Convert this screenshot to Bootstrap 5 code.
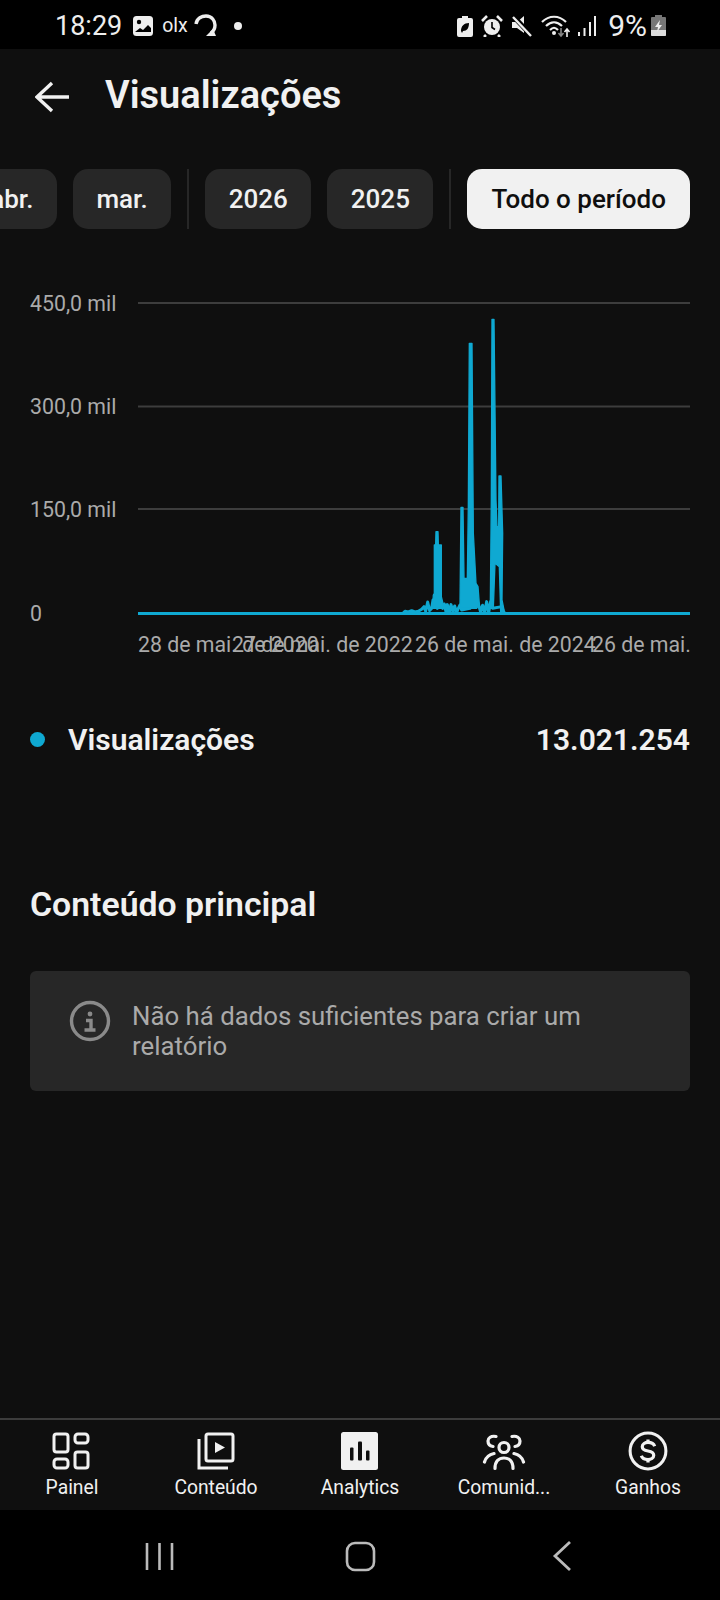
<!DOCTYPE html>
<html lang="pt-BR">
<head>
  <meta charset="UTF-8">
  <title>Visualizações</title>
  <link href="https://cdn.jsdelivr.net/npm/bootstrap@5.3.3/dist/css/bootstrap.min.css" rel="stylesheet">
  <style>
    body { background: #000; margin: 0; font-family: Roboto, "Noto Sans", sans-serif; color: #f1f1f1; }
    svg { display: block; flex-shrink: 0; }
    .phone { width: 720px; height: 1600px; background: #0f0f0f; overflow: hidden; }
    .status-bar { height: 49px; background: #000; padding: 2px 54px 0 55px; }
    .status-time { font-size: 27px; line-height: 30px; color: #eee; margin-right: 10px; }
    .status-pct { font-size: 30px; line-height: 30px; color: #eee; margin: 0 4px 0 11px; }
    .olx-mark { font-size: 19.500px; line-height: 20px; width: 28px; margin-left: 8px; color: #eee; }
    .page-head { height: 95px; padding-left: 35px; }
    .page-title { font-size: 38px; font-weight: 600; margin: 0 0 3px 35px; line-height: 44px; }
    .chip-row { margin-top: 25px; height: 60px; padding-right: 30px; gap: 16px; overflow: hidden; }
    .chip-item { height: 60px; background: #272727; border-radius: 15px; font-size: 26px; font-weight: 500; padding: 0 23.5px; flex-shrink: 0; }
    .chip-on { background: #f1f1f1; color: #0f0f0f; padding: 0 24px; }
    .chip-sep { width: 2px; height: 60px; background: #272727; flex-shrink: 0; }
    .chart-wrap { margin-top: 61px; }
    .chart-wrap text { font-family: Roboto, sans-serif; font-size: 21.300px; fill: #aaa; }
    .legend-row { margin: 59px 30px 0; height: 40px; font-size: 30px; font-weight: 600; }
    .legend-dot { width: 15px; height: 15px; background: #0fa9d2; margin: 0 23px 0 0; }
    .section-name { margin: 126px 30px 0; font-size: 33.800px; font-weight: 600; line-height: 40px; }
    .empty-box { margin: 46px 30px 0; height: 120px; background: #272727; padding: 29px 40px 0 39px; color: #aaa; font-size: 25.800px; line-height: 30px; gap: 21px; }
    .empty-text { margin-top: 1px; }
    .tab-bar { margin-top: auto; height: 92px; border-top: 2px solid #3c3c3c; padding-top: 11px; }
    .tab-item { width: 144px; font-size: 19.300px; line-height: 24px; gap: 5px; }
    .tab-item svg { height: 40px; }
    .sys-nav { height: 90px; background: #000; }
  </style>
</head>
<body>
  <div class="phone d-flex flex-column">

    <div class="status-bar d-flex align-items-center">
      <span class="status-time">18:29</span>
      <svg width="22" height="22" viewBox="0 0 22 22"><rect x="1" y="1" width="20" height="20" rx="3.5" fill="#eee"/><circle cx="7" cy="7" r="2.2" fill="#000"/><path d="M3 17l5-4 3 2 5-5 3 3v4H3z" fill="#000"/></svg>
      <span class="olx-mark">olx</span>
      <svg width="24" height="26" viewBox="0 0 24 26" class="ms-1"><path d="M2 11C3 5 8 3 12 3c6 0 9 5 9 9 0 3-1 6-4 8" fill="none" stroke="#eee" stroke-width="3.4"/><path d="M12 23h10l-3-7z" fill="#eee"/></svg>
      <svg width="10" height="10" viewBox="0 0 10 10" style="margin-left:15px"><circle cx="5" cy="5" r="4" fill="#eee"/></svg>

      <div class="ms-auto d-flex align-items-center">
        <svg width="16" height="22" viewBox="0 0 16 22"><path d="M5 1h6v2h3a2 2 0 0 1 2 2v15a2 2 0 0 1-2 2H2a2 2 0 0 1-2-2V5a2 2 0 0 1 2-2h3z" fill="#eee"/><path d="M4 16c0-5 3-8 8-8 0 5-2 8-6 8l-1 2zM6 14c1-2 2-3 4-4" fill="#000"/></svg>
        <svg width="22" height="22" viewBox="0 0 22 22" style="margin-left:8px"><circle cx="11" cy="12" r="8" fill="#eee"/><path d="M11 7v5.5l3 2" fill="none" stroke="#000" stroke-width="1.6"/><path d="M1 6l5-5M21 6l-5-5M5 20l-2 2M17 20l2 2" stroke="#eee" stroke-width="2.6"/></svg>
        <svg width="22" height="22" viewBox="0 0 22 22" style="margin-left:8px"><path d="M1 7h5l7-6v17l-7-5H1z" fill="#eee"/><path d="M2 1l19 20" stroke="#000" stroke-width="5"/><path d="M2 2l18 19" stroke="#eee" stroke-width="2.4"/></svg>
        <svg width="30" height="24" viewBox="0 0 30 24" style="margin-left:8px"><path d="M1 8c7-7 17-7 24 0M5 12c5-5 11-5 16 0M9 16c3-3 5-3 8 0" fill="none" stroke="#eee" stroke-width="2.2"/><circle cx="13" cy="19" r="2" fill="#eee"/><path d="M20 14v8m-2.500-3l2.500 3 2.500-3" fill="none" stroke="#888" stroke-width="1.6"/><path d="M26 23v-8m-2.500 3l2.500-3 2.500 3" fill="none" stroke="#eee" stroke-width="1.6"/></svg>
        <svg width="20" height="22" viewBox="0 0 20 22" style="margin-left:6px"><path d="M2 21v-4M7.500 21v-8M13 21V7M18 21V1" stroke="#eee" stroke-width="2"/></svg>
        <span class="status-pct">9%</span>
        <svg width="15" height="21" viewBox="0 0 15 21"><path d="M4 0h7v2h3a1 1 0 0 1 1 1v17a1 1 0 0 1-1 1H1a1 1 0 0 1-1-1V3a1 1 0 0 1 1-1h3z" fill="#777"/><path d="M0 15h15v5a1 1 0 0 1-1 1H1a1 1 0 0 1-1-1z" fill="#ddd"/><path d="M9 5L4 12h3l-1 5 5-7H8z" fill="#eee"/></svg>
      </div>
    </div>

    <div class="page-head d-flex align-items-center">
      <svg width="35" height="32" viewBox="0 0 35 32"><path d="M34 16H2M17 2L2 16l15 14" fill="none" stroke="#f1f1f1" stroke-width="3.4"/></svg>
      <h1 class="page-title">Visualizações</h1>
    </div>

    <div class="chip-row d-flex justify-content-end">
      <div class="chip-item d-flex align-items-center">abr.</div>
      <div class="chip-item d-flex align-items-center">mar.</div>
      <div class="chip-sep"></div>
      <div class="chip-item d-flex align-items-center">2026</div>
      <div class="chip-item d-flex align-items-center">2025</div>
      <div class="chip-sep"></div>
      <div class="chip-item chip-on d-flex align-items-center">Todo o período</div>
    </div>

    <div class="chart-wrap">
      <svg width="720" height="370" viewBox="0 290 720 370">
        <path d="M138 303H690M138 406.500H690M138 509H690" stroke="#3d3d3d" stroke-width="2"/>
        <text x="30" y="311">450,0 mil</text>
        <text x="30" y="414">300,0 mil</text>
        <text x="30" y="517">150,0 mil</text>
        <text x="30" y="621">0</text>
        <text x="138" y="652">28 de mai. de 2020</text>
        <text x="232" y="652">27 de mai. de 2022</text>
        <text x="415" y="652">26 de mai. de 2024</text>
        <text x="592" y="652">26 de mai.</text>
        <path d="M138 613.500H690" stroke="#0fa9d2" stroke-width="3"/>
        <g transform="translate(380 300) scale(.3333)" fill="#0fa9d2" stroke="#0fa9d2" stroke-width="4" stroke-linejoin="round">
          <polyline fill="none" stroke-width="9" points="70,938 75,934 85,936 95,932 105,936 115,934 125,928 132,920 137,934 143,906 149,932 155,925 159,900 165,915 172,925 180,915 188,925 193,912 198,936 202,914 208,938 213,914 219,936 224,918 230,938 235,925 240,915 245,930 270,925 280,910 292,905 296,915 302,936 308,916 314,938 320,905 326,938 332,905 338,925 366,920 370,935 375,940"/>
          <path d="M158 925L160 885L163 880V735H167L168 695H174L175 735H184V890L190 915V925Z"/>
          <path d="M240 920L243 622H249L252 835H262L265 620L268 130H276L280 700L288 850L294 860L298 912L290 925H245Z"/>
          <path d="M331 910L334 600L336 58H342L348 600L351 680H356L357 528H363L368 700L366 900L373 935H362L358 800L345 790L340 925H332Z"/>
        </g>
      </svg>
    </div>

    <div class="legend-row d-flex align-items-center">
      <span class="legend-dot rounded-circle"></span>
      <span>Visualizações</span>
      <span class="ms-auto">13.021.254</span>
    </div>

    <h2 class="section-name">Conteúdo principal</h2>

    <div class="empty-box d-flex align-items-start rounded-2">
      <svg width="42" height="42" viewBox="0 0 42 42"><circle cx="21" cy="21" r="18.500" fill="none" stroke="#8a8a8a" stroke-width="3.4"/><circle cx="21" cy="14" r="2.400" fill="#8a8a8a"/><path d="M17 20.500h5v9.500M15.500 30h11" fill="none" stroke="#8a8a8a" stroke-width="3.4"/></svg>
      <div class="empty-text">Não há dados suficientes para criar um relatório</div>
    </div>

    <nav class="tab-bar d-flex">
      <div class="tab-item d-flex flex-column align-items-center">
        <svg width="40" height="40" viewBox="0 0 40 40" fill="none" stroke="#f1f1f1" stroke-width="3"><rect x="2" y="3" width="14" height="18" rx="2.500"/><rect x="23" y="3" width="13" height="9" rx="3"/><rect x="2" y="28" width="14" height="9" rx="3"/><rect x="23" y="21" width="13" height="16" rx="2.500"/></svg>
        <span>Painel</span>
      </div>
      <div class="tab-item d-flex flex-column align-items-center">
        <svg width="40" height="40" viewBox="0 0 40 40" fill="none" stroke="#f1f1f1" stroke-width="3"><rect x="10" y="3" width="27" height="27" rx="2"/><path d="M3 8v29h29"/><path d="M19 11l10 5.500-10 5.500z" fill="#f1f1f1" stroke="none"/></svg>
        <span>Conteúdo</span>
      </div>
      <div class="tab-item d-flex flex-column align-items-center">
        <svg width="40" height="40" viewBox="0 0 40 40"><rect x="1" y="1" width="37" height="38" rx="2.500" fill="#f1f1f1"/><g fill="#0f0f0f"><rect x="10" y="16.500" width="3.500" height="13" rx="1"/><rect x="18" y="10.500" width="4" height="19" rx="1"/><rect x="26" y="19.500" width="3.500" height="10" rx="1"/></g></svg>
        <span>Analytics</span>
      </div>
      <div class="tab-item d-flex flex-column align-items-center">
        <svg width="46" height="40" viewBox="0 0 46 40" fill="none" stroke="#f1f1f1" stroke-width="3.200" stroke-linecap="round"><circle cx="23" cy="16.500" r="5"/><path d="M14 37.500C14 30 18 27 23 27s9 3 9 10.500"/><path d="M15 5.500C10 4.500 7 7 7 10c0 3 2 5 5 5.500M31 5.500C36 4.500 39 7 39 10c0 3-2 5-5 5.500"/><path d="M3.500 31C5 26 8 23.500 13 22.500M42.500 31C41 26 38 23.500 33 22.500"/></svg>
        <span>Comunid...</span>
      </div>
      <div class="tab-item d-flex flex-column align-items-center">
        <svg width="42" height="42" viewBox="0 0 42 42" fill="none" stroke="#f1f1f1" stroke-width="3.200"><circle cx="21" cy="21" r="18.800"/><path d="M28 16c-1-3-4-4-7-4s-6 1.500-6 4.500 3 4 6 4.500 6 1.500 6 4.500-3 4.500-6 4.500-6-1-7-4" stroke-width="3.400"/><path d="M21 9v3M21 30v3" stroke-width="3.400"/></svg>
        <span>Ganhos</span>
      </div>
    </nav>

    <div class="sys-nav d-flex align-items-center">
      <svg width="720" height="90" viewBox="0 1510 720 90" fill="none" stroke="#bbb"><path d="M147 1543v27M159.500 1543v27M172 1543v27" stroke-width="2.600"/><rect x="347" y="1543" width="27" height="27" rx="8" stroke-width="2.600"/><path d="M570 1542l-15 14 15 14" stroke-width="2.800"/></svg>
    </div>
  </div>
  <script src="https://cdn.jsdelivr.net/npm/bootstrap@5.3.3/dist/js/bootstrap.bundle.min.js"></script>
</body>
</html>
